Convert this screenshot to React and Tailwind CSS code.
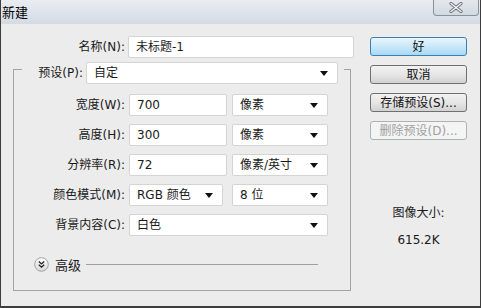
import React from "react";

const Arrow = () => (
  <svg width="8" height="5" viewBox="0 0 8 5" className="shrink-0">
    <path d="M0 0 H8 L4 5 Z" fill="#111" />
  </svg>
);

const Input = ({ value, w }) => (
  <div
    className={`${w} h-[22px] bg-white border border-[#d4d4d4] rounded-[2px] flex items-center pl-[7px] text-[#1a1a1a]`}
  >
    {value}
  </div>
);

const Select = ({ value, w }) => (
  <div
    className={`${w} h-[22px] bg-white border border-[#d4d4d4] rounded-[2px] flex items-center justify-between pl-[7px] pr-[9px] text-[#1a1a1a]`}
  >
    <span>{value}</span>
    <Arrow />
  </div>
);

const Label = ({ children, w }) => (
  <div className={`${w} text-right text-[#1a1a1a] shrink-0`}>{children}</div>
);

const Btn = ({ children, primary, disabled }) => (
  <div
    className={
      "w-[97px] h-[19px] rounded-[3px] border flex items-center justify-center " +
      (primary
        ? "border-[#3c7fb1] bg-gradient-to-b from-[#eaf6fd] via-[#c9e8f9] to-[#a7d9f5] text-[#111]"
        : disabled
        ? "border-[#adb2b5] bg-[#f4f4f4] text-[#a0a0a0]"
        : "border-[#707070] bg-gradient-to-b from-[#f2f2f2] via-[#e6e6e6] to-[#d2d2d2] text-[#111]")
    }
  >
    {children}
  </div>
);

export default function App() {
  return (
    <div className="w-[481px] h-[308px] flex flex-col bg-[#ececec] border-x border-b-2 border-[#3d3d3d] font-['DejaVu_Sans','Noto_Sans_CJK_SC',sans-serif] text-[12px] leading-none overflow-hidden">
      {/* title bar */}
      <div className="h-[24px] shrink-0 flex justify-between bg-gradient-to-b from-[#e9edf2] to-[#d4dbe4]">
        <div className="pt-[5px] pl-[1px] text-[13px] text-black font-['Noto_Sans_CJK_SC',sans-serif]">
          新建
        </div>
        <div className="mr-[1px] w-[46px] h-[16px] rounded-b-[4px] border border-t-0 border-[#8c9097] bg-gradient-to-b from-[#e4e8ee] to-[#d3d9e1] flex items-center justify-center">
          <svg width="14" height="11" viewBox="0 0 14 11">
            <path d="M2 1.5 L12 9.5 M12 1.5 L2 9.5" stroke="#6b6f75" strokeWidth="3.2" strokeLinecap="round" />
            <path d="M2 1.5 L12 9.5 M12 1.5 L2 9.5" stroke="#f4f6f8" strokeWidth="1.4" strokeLinecap="round" />
          </svg>
        </div>
      </div>

      {/* body */}
      <div className="flex flex-1">
        {/* left column */}
        <div className="w-[358px] flex flex-col">
          <div className="mt-[12px] flex items-center">
            <Label w="w-[124px]">名称(N):</Label>
            <div className="ml-[3px]">
              <Input value="未标题-1" w="w-[226px]" />
            </div>
          </div>

          <div className="mt-[11px] ml-[12px] w-[338px] h-[222px] border border-[#a3a3a3] flex flex-col">
            <div className="-mt-[8px] ml-[8px] w-fit flex items-center bg-[#ececec] pr-[6px]">
              <Label w="w-[61px]">预设(P):</Label>
              <div className="ml-[3px]">
                <Select value="自定" w="w-[252px]" />
              </div>
            </div>

            <div className="mt-[10px] flex flex-col gap-[8px]">
              <div className="flex items-center">
                <Label w="w-[111px]">宽度(W):</Label>
                <div className="ml-[4px]"><Input value="700" w="w-[98px]" /></div>
                <div className="ml-[5px]"><Select value="像素" w="w-[96px]" /></div>
              </div>
              <div className="flex items-center">
                <Label w="w-[111px]">高度(H):</Label>
                <div className="ml-[4px]"><Input value="300" w="w-[98px]" /></div>
                <div className="ml-[5px]"><Select value="像素" w="w-[96px]" /></div>
              </div>
              <div className="flex items-center">
                <Label w="w-[111px]">分辨率(R):</Label>
                <div className="ml-[4px]"><Input value="72" w="w-[98px]" /></div>
                <div className="ml-[5px]"><Select value="像素/英寸" w="w-[96px]" /></div>
              </div>
              <div className="flex items-center">
                <Label w="w-[111px]">颜色模式(M):</Label>
                <div className="ml-[4px]"><Select value="RGB 颜色" w="w-[94px]" /></div>
                <div className="ml-[9px]"><Select value="8 位" w="w-[96px]" /></div>
              </div>
              <div className="flex items-center">
                <Label w="w-[111px]">背景内容(C):</Label>
                <div className="ml-[4px]"><Select value="白色" w="w-[199px]" /></div>
              </div>
            </div>

            <div className="mt-[21px] ml-[20px] flex items-center">
              <svg width="15" height="15" viewBox="0 0 15 15" className="shrink-0">
                <defs>
                  <linearGradient id="g" x1="0" y1="0" x2="0" y2="1">
                    <stop offset="0" stopColor="#ffffff" />
                    <stop offset="1" stopColor="#d8d8d8" />
                  </linearGradient>
                </defs>
                <circle cx="7.5" cy="7.5" r="6.8" fill="url(#g)" stroke="#9a9a9a" strokeWidth="0.9" />
                <path d="M4.8 4.6 L7.5 7 L10.2 4.6 M4.8 7.8 L7.5 10.2 L10.2 7.8" fill="none" stroke="#222" strokeWidth="1.3" />
              </svg>
              <span className="ml-[6px] text-[#1a1a1a] font-['Noto_Sans_CJK_SC',sans-serif] text-[13px]">高级</span>
              <div className="ml-[5px] w-[232px] h-px bg-[#9f9f9f]" />
            </div>
          </div>
        </div>

        {/* right column */}
        <div className="ml-[11px] flex flex-col items-center w-[97px]">
          <div className="mt-[13px] flex flex-col gap-[9px]">
            <Btn primary>好</Btn>
            <Btn>取消</Btn>
            <Btn>存储预设(S)...</Btn>
            <Btn disabled>删除预设(D)...</Btn>
          </div>
          <div className="mt-[67px] text-[#1a1a1a]">图像大小:</div>
          <div className="mt-[15px] text-[#1a1a1a]">615.2K</div>
        </div>
      </div>
    </div>
  );
}
